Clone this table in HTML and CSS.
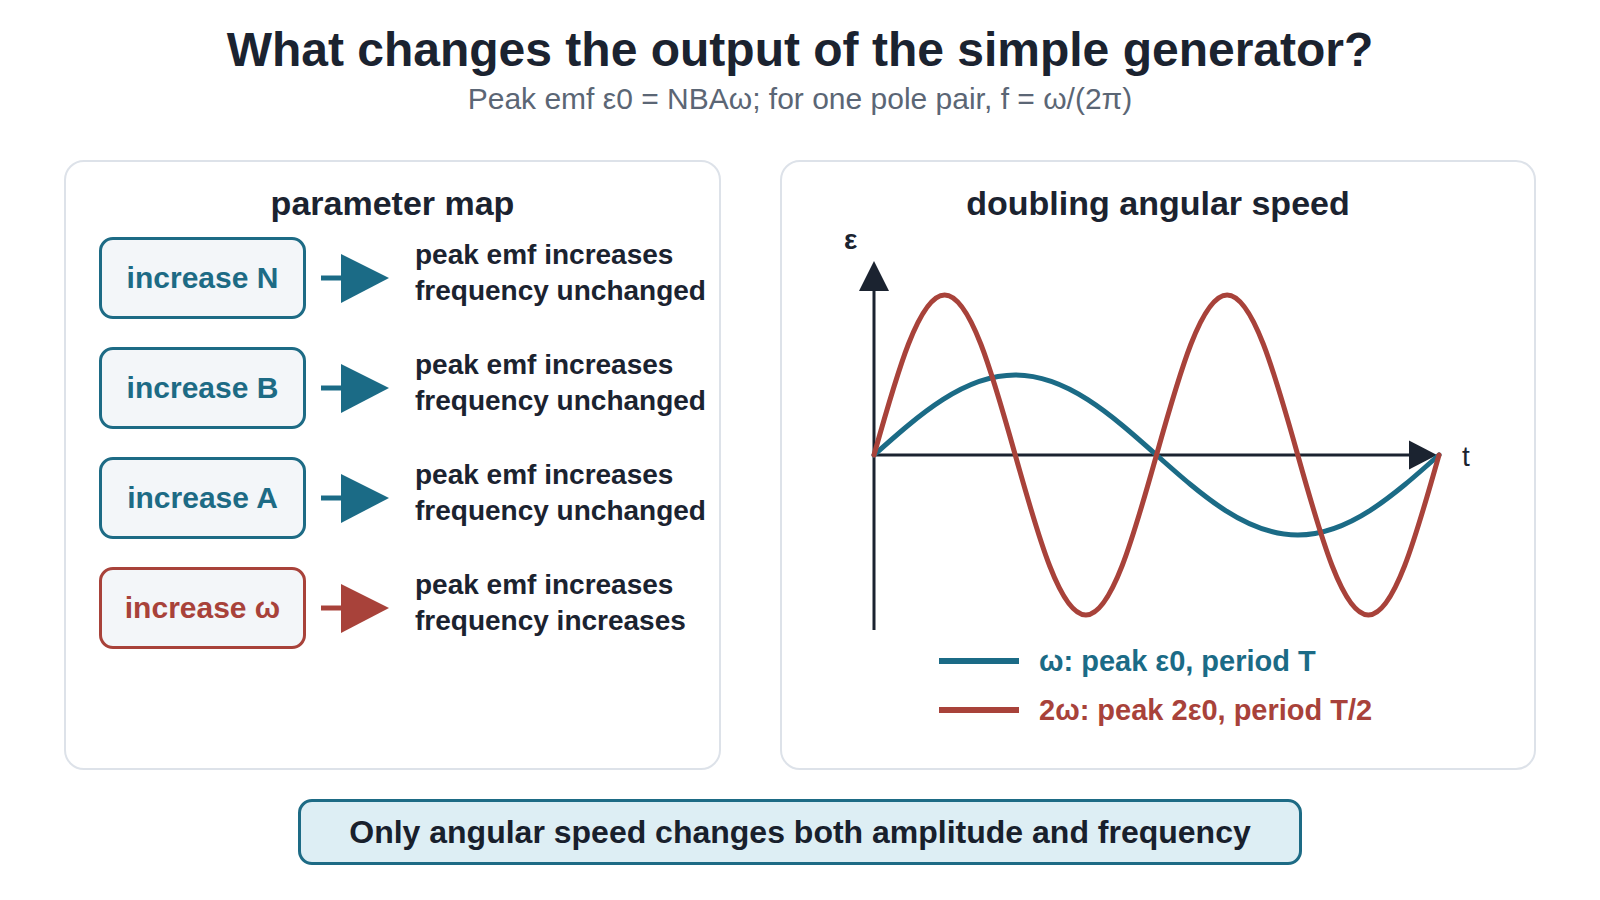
FILE: index.html
```html
<!DOCTYPE html>
<html lang="en">
<head>
<meta charset="utf-8">
<title>Simple generator output</title>
<link rel="stylesheet" href="styles.css">
</head>
<body>
<header class="head">
  <h1 class="title">What changes the output of the simple generator?</h1>
  <p class="subtitle">Peak emf ε0 = NBAω; for one pole pair, f = ω/(2π)</p>
</header>
<main class="panels">
  <section class="card map">
    <h2 class="card-title">parameter map</h2>
    <div class="rows">
      <div class="row teal">
        <div class="box">increase N</div>
        <svg class="arrow" width="72" height="52" viewBox="0 0 72 52"><line x1="2" y1="26" x2="30" y2="26" stroke-width="5"/><polygon points="22,2 70,26 22,51"/></svg>
        <div class="desc"><span>peak emf increases</span><span>frequency unchanged</span></div>
      </div>
      <div class="row teal">
        <div class="box">increase B</div>
        <svg class="arrow" width="72" height="52" viewBox="0 0 72 52"><line x1="2" y1="26" x2="30" y2="26" stroke-width="5"/><polygon points="22,2 70,26 22,51"/></svg>
        <div class="desc"><span>peak emf increases</span><span>frequency unchanged</span></div>
      </div>
      <div class="row teal">
        <div class="box">increase A</div>
        <svg class="arrow" width="72" height="52" viewBox="0 0 72 52"><line x1="2" y1="26" x2="30" y2="26" stroke-width="5"/><polygon points="22,2 70,26 22,51"/></svg>
        <div class="desc"><span>peak emf increases</span><span>frequency unchanged</span></div>
      </div>
      <div class="row red">
        <div class="box">increase ω</div>
        <svg class="arrow" width="72" height="52" viewBox="0 0 72 52"><line x1="2" y1="26" x2="30" y2="26" stroke-width="5"/><polygon points="22,2 70,26 22,51"/></svg>
        <div class="desc"><span>peak emf increases</span><span>frequency increases</span></div>
      </div>
    </div>
  </section>
  <section class="card chart">
    <h2 class="card-title">doubling angular speed</h2>
    <svg class="plot" width="750" height="414" viewBox="0 0 750 414">
      <text class="lab-eps" x="62" y="26">ε</text>
      <line class="axis" x1="92" y1="407" x2="92" y2="60"/>
      <polygon class="axis-head" points="92,38 107,68 77,68"/>
      <line class="axis" x1="92" y1="232" x2="630" y2="232"/>
      <polygon class="axis-head" points="655,232 627,217.5 627,246.5"/>
      <text class="lab-t" x="680" y="243">t</text>
      <path class="wave w1" d="M92,232 C138.06,191.02 182.13,152 233.25,152 S328.44,191.02 374.5,232 S464.63,312 515.75,312 S610.94,272.98 657,232"/>
      <path class="wave w2" d="M92,232 C115.03,150.03 137.07,72 162.625,72 S210.22,150.03 233.25,232 S278.32,392 303.875,392 S351.47,313.97 374.5,232 S419.57,72 445.125,72 S492.72,150.03 515.75,232 S560.82,392 586.375,392 S633.97,313.97 657,232"/>
    </svg>
    <div class="legend">
      <div class="leg teal"><span class="swatch"></span><span>ω: peak ε0, period T</span></div>
      <div class="leg red"><span class="swatch"></span><span>2ω: peak 2ε0, period T/2</span></div>
    </div>
  </section>
</main>
<footer class="banner">Only angular speed changes both amplitude and frequency</footer>
</body>
</html>
```
FILE: styles.css
```css
* { box-sizing: border-box; }
html, body { margin: 0; padding: 0; }
body {
  width: 1600px;
  height: 900px;
  background: #ffffff;
  font-family: "Liberation Sans", Arial, Helvetica, sans-serif;
  color: #1b2330;
  overflow: hidden;
}
.head { padding-top: 22px; text-align: center; }
.title {
  margin: 0;
  font-size: 48px;
  line-height: 56px;
  font-weight: 700;
  color: #1b2330;
}
.subtitle {
  margin: 4px 0 0;
  font-size: 30px;
  line-height: 34px;
  color: #5b6675;
}
.panels {
  display: grid;
  grid-template-columns: 657px 756px;
  column-gap: 59px;
  justify-content: center;
  margin-top: 44px;
}
.card {
  height: 610px;
  border: 2px solid #dde2e9;
  border-radius: 20px;
  background: #ffffff;
  padding-top: 21px;
}
.card-title {
  margin: 0;
  font-size: 34px;
  line-height: 40px;
  font-weight: 700;
  text-align: center;
  color: #1b2330;
}
.rows {
  display: flex;
  flex-direction: column;
  gap: 28px;
  margin-top: 14px;
  padding-left: 33px;
}
.row {
  display: flex;
  align-items: flex-start;
}
.box {
  width: 207px;
  height: 82px;
  border: 3px solid #1d6b85;
  border-radius: 14px;
  background: #f3f6f9;
  display: flex;
  align-items: center;
  justify-content: center;
  font-size: 30px;
  font-weight: 700;
  color: #1d6b85;
}
.row.red .box { border-color: #a8423a; color: #a8423a; }
.arrow { display: block; margin: 15px 0 0 13px; }
.arrow line { stroke: #1b6b86; }
.arrow polygon { fill: #1b6b86; }
.row.red .arrow line { stroke: #a8423a; }
.row.red .arrow polygon { fill: #a8423a; }
.desc {
  display: flex;
  flex-direction: column;
  margin-left: 24px;
  font-size: 28px;
  line-height: 36px;
  font-weight: 700;
  color: #1b2330;
  white-space: nowrap;
}
.plot { display: block; overflow: visible; }
.axis { stroke: #1b2330; stroke-width: 3; }
.axis-head { fill: #1b2330; }
.lab-eps { font-family: "Liberation Sans", Arial, sans-serif; font-size: 28px; font-weight: 700; fill: #1b2330; }
.lab-t { font-family: "Liberation Sans", Arial, sans-serif; font-size: 28px; fill: #1b2330; }
.wave { fill: none; stroke-width: 5; stroke-linejoin: round; stroke-linecap: round; }
.w1 { stroke: #1b6b86; }
.w2 { stroke: #a8423a; }
.legend {
  display: flex;
  flex-direction: column;
  gap: 1px;
  padding-left: 157px;
}
.leg {
  display: flex;
  align-items: center;
  gap: 20px;
  height: 48px;
  font-size: 29px;
  font-weight: 700;
}
.leg.teal { color: #1b6b86; }
.leg.red { color: #a8423a; }
.swatch { display: block; width: 80px; height: 6px; background: currentColor; }
.banner {
  width: 1004px;
  height: 66px;
  margin: 29px auto 0;
  border: 3px solid #1d6b85;
  border-radius: 14px;
  background: #ddeef4;
  display: flex;
  align-items: center;
  justify-content: center;
  font-size: 32px;
  font-weight: 700;
  color: #18202c;
}
```
